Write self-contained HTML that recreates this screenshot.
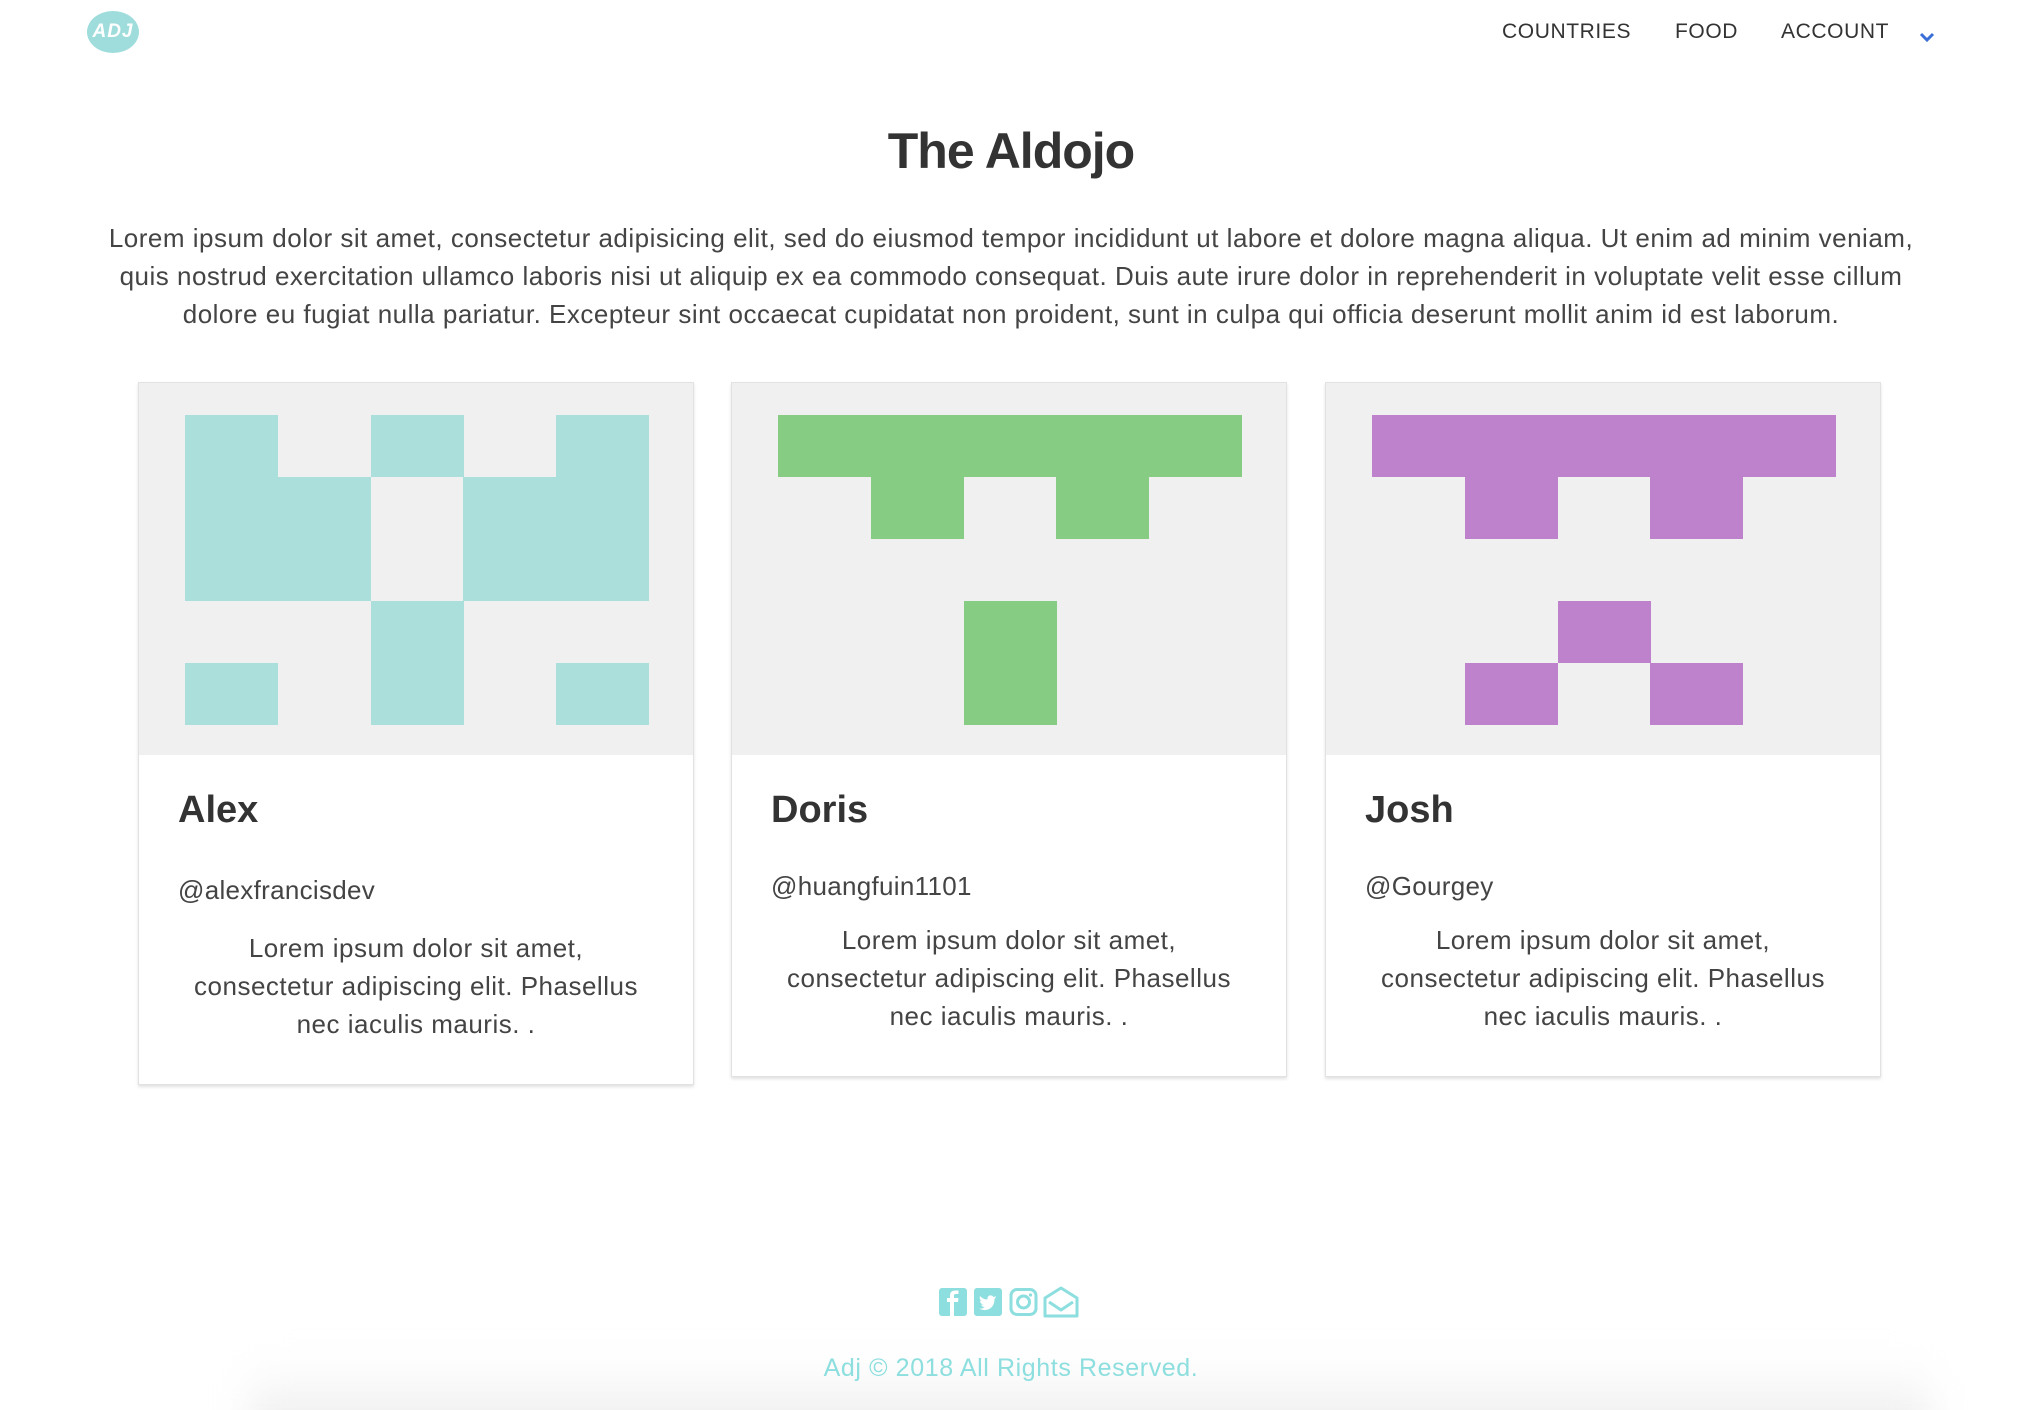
<!DOCTYPE html>
<html style="width:2022px;height:1410px;overflow:hidden"><head><meta charset="utf-8"><style>
*{margin:0;padding:0;box-sizing:border-box}
body{width:2022px;height:1410px;position:relative;overflow:hidden;background:#fff;font-family:"Liberation Sans",sans-serif;color:#333}
.abs{position:absolute}
.logo{left:87px;top:11px;width:52px;height:42px;border-radius:50%;background:#9fdcdc;color:#fff;font-weight:bold;font-style:italic;font-size:19px;text-align:center;line-height:42px;letter-spacing:1px}
.nav{top:20px;font-size:21px;color:#333;letter-spacing:.6px}
h1{position:absolute;top:122px;left:0;width:2022px;text-align:center;font-size:50px;font-weight:bold;color:#333;letter-spacing:-1px}
.intro{top:219px;left:100px;width:1822px;text-align:center;font-size:26px;letter-spacing:.5px;line-height:38px;color:#444}
.card{top:382px;width:556px;background:#fff;border:1px solid #e2e2e2;box-shadow:0 2px 3px rgba(0,0,0,.12)}
.img{height:372px;background:#f0f0f0;position:relative}
.img i{position:absolute;width:93px;height:62px}
.name{position:absolute;left:39px;top:406px;font-size:38px;font-weight:bold;color:#333}
.handle{position:absolute;left:39px;font-size:26px;letter-spacing:.3px;color:#444}
.desc{position:absolute;left:0;width:100%;text-align:center;font-size:26px;letter-spacing:.5px;line-height:38px;color:#444}
.foot{top:1354px;left:0;width:2022px;text-align:center;font-size:25px;color:#8ddede;letter-spacing:.6px}
</style></head><body>
<div class="abs" style="left:250px;top:1360px;width:1680px;height:90px;background:linear-gradient(#fff,#e8e8e8);filter:blur(18px)"></div>
<div class="abs logo">ADJ</div>
<div class="abs nav" style="left:1502px">COUNTRIES</div>
<div class="abs nav" style="left:1675px">FOOD</div>
<div class="abs nav" style="left:1781px">ACCOUNT</div>
<svg class="abs" style="left:1918px;top:30px" width="18" height="14" viewBox="0 0 18 14"><path d="M3 4 L9 10 L15 4" stroke="#3a6fd8" stroke-width="3" fill="none"/></svg>
<h1>The Aldojo</h1>
<div class="abs intro">Lorem ipsum dolor sit amet, consectetur adipisicing elit, sed do eiusmod tempor incididunt ut labore et dolore magna aliqua. Ut enim ad minim veniam, quis nostrud exercitation ullamco laboris nisi ut aliquip ex ea commodo consequat. Duis aute irure dolor in reprehenderit in voluptate velit esse cillum dolore eu fugiat nulla pariatur. Excepteur sint occaecat cupidatat non proident, sunt in culpa qui officia deserunt mollit anim id est laborum.</div>

<div class="abs card" style="left:138px;height:703px">
<div class="img" id="a"></div>
<div class="name">Alex</div>
<div class="handle" style="top:492px">@alexfrancisdev</div>
<div class="desc" style="top:546px">Lorem ipsum dolor sit amet,<br>consectetur adipiscing elit. Phasellus<br>nec iaculis mauris. .</div>
</div>
<div class="abs card" style="left:731px;height:695px">
<div class="img" id="b"></div>
<div class="name">Doris</div>
<div class="handle" style="top:488px">@huangfuin1101</div>
<div class="desc" style="top:538px">Lorem ipsum dolor sit amet,<br>consectetur adipiscing elit. Phasellus<br>nec iaculis mauris. .</div>
</div>
<div class="abs card" style="left:1325px;height:695px">
<div class="img" id="c"></div>
<div class="name">Josh</div>
<div class="handle" style="top:488px">@Gourgey</div>
<div class="desc" style="top:538px">Lorem ipsum dolor sit amet,<br>consectetur adipiscing elit. Phasellus<br>nec iaculis mauris. .</div>
</div>

<svg class="abs" style="left:939px;top:1286px" width="140" height="32" viewBox="0 0 140 32">
<rect x="0" y="2" width="28" height="28" rx="3" fill="#8ddede"/>
<path d="M15 30 V16 H19 L19.5 12 H15 V9.5 Q15 8 17 8 H19.5 V4.5 H16 Q11 4.5 11 9.5 V12 H8 V16 H11 V30 Z" fill="#fff"/>
<rect x="35" y="2" width="28" height="28" rx="3" fill="#8ddede"/>
<path d="M57 10 Q55.5 11 54.5 11 Q53 9 50.5 9.5 Q48 10.5 48.5 13.5 Q44 13.5 41 10 Q40 13 42.5 15 Q41.5 15 41 14.5 Q41 17.5 44 18.5 Q43 19 42 18.5 Q43 21 45.5 21 Q43.5 23 40 22.5 Q44 25 49 23.5 Q55.5 21 55.5 13 Q56.5 12 57 10 Z" fill="#fff"/>
<rect x="72" y="3.5" width="25" height="25" rx="6" fill="none" stroke="#8ddede" stroke-width="3"/>
<circle cx="84.5" cy="16" r="6" fill="none" stroke="#8ddede" stroke-width="3"/>
<circle cx="91.5" cy="9" r="1.6" fill="#8ddede"/>
<path d="M106 12 L122 2 L138 12 V30 H106 Z" fill="none" stroke="#8ddede" stroke-width="3" stroke-linejoin="round"/>
<path d="M110 16 L122 24 L134 16" fill="none" stroke="#8ddede" stroke-width="3" stroke-linejoin="round"/>
</svg>
<div class="abs foot">Adj © 2018 All Rights Reserved.</div>

<script>
function draw(id,color,cells){var e=document.getElementById(id);cells.forEach(function(rc){var d=document.createElement('i');d.style.left=(46+rc[1]*92.8)+'px';d.style.top=(32+rc[0]*62)+'px';d.style.background=color;e.appendChild(d);});}
draw('a','#abdfdb',[[0,0],[0,2],[0,4],[1,0],[1,1],[1,3],[1,4],[2,0],[2,1],[2,3],[2,4],[3,2],[4,0],[4,2],[4,4]]);
draw('b','#87cc83',[[0,0],[0,1],[0,2],[0,3],[0,4],[1,1],[1,3],[3,2],[4,2]]);
draw('c','#bd82cb',[[0,0],[0,1],[0,2],[0,3],[0,4],[1,1],[1,3],[3,2],[4,1],[4,3]]);
</script>
</body></html>
